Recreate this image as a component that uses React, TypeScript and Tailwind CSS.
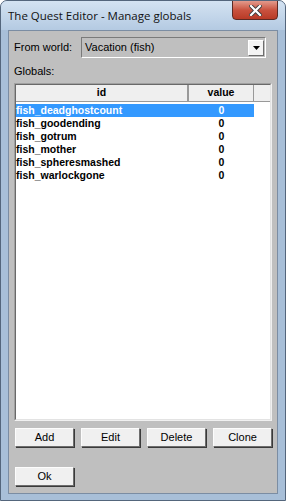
import React from "react";

const rows = [
  { id: "fish_deadghostcount", value: 0 },
  { id: "fish_goodending", value: 0 },
  { id: "fish_gotrum", value: 0 },
  { id: "fish_mother", value: 0 },
  { id: "fish_spheresmashed", value: 0 },
  { id: "fish_warlockgone", value: 0 },
];

const btn =
  "h-[19px] w-[59px] bg-[#f0f0f0] border border-t-[#fcfcfc] border-l-[#fcfcfc] border-r-[#6d6d6d] border-b-[#6d6d6d] shadow-[1px_1px_0_#3a3a3a] text-[11px] text-black flex items-center justify-center";

export default function App() {
  return (
    <div className="w-[286px] h-[501px] bg-[#a8bfd8] border border-[#54667c] rounded-t-[7px] flex flex-col font-['Liberation_Sans',sans-serif] overflow-hidden">
      {/* Title bar */}
      <div className="h-[29px] shrink-0 relative bg-gradient-to-b from-[#d4e3f2] to-[#b4cae2]">
        <div className="absolute left-[7px] top-[8px] text-[11.5px] text-[#111] font-['Open_Sans',sans-serif] leading-[14px]">
          The Quest Editor - Manage globals
        </div>
        <div className="absolute left-[231px] top-[-1px] w-[46px] h-[20px] rounded-b-[4px] border border-[#5c2a24] bg-gradient-to-b from-[#e29a8c] via-[#c9523f] to-[#b83a26] flex items-center justify-center">
          <svg width="13" height="11" viewBox="0 0 13 11">
            <path
              d="M2 1 L11 10 M11 1 L2 10"
              stroke="#3b3b3b"
              strokeWidth="4"
              strokeLinecap="square"
            />
            <path
              d="M2 1 L11 10 M11 1 L2 10"
              stroke="#ffffff"
              strokeWidth="2.2"
              strokeLinecap="square"
            />
          </svg>
        </div>
      </div>

      {/* Client area */}
      <div className="mx-[7px] mb-[6px] flex-1 border border-[#7b8da3] bg-[#bfbfbf] flex flex-col text-[11px] text-black">
        <div className="flex items-center h-[21px] mt-[6px] pl-[5px]">
          <span className="w-[67px]">From world:</span>
          <div className="w-[185px] h-[21px] border border-t-[#7a7a7a] border-l-[#7a7a7a] border-r-white border-b-white flex items-center">
            <span className="flex-1 pl-[3px]">Vacation (fish)</span>
            <div className="w-[16px] h-[16px] mr-[1px] bg-[#f4f4f4] border border-t-white border-l-white border-r-[#6d6d6d] border-b-[#6d6d6d] flex items-center justify-center">
              <svg width="7" height="4" viewBox="0 0 7 4">
                <path d="M0 0 H7 L3.5 4 Z" fill="#000" />
              </svg>
            </div>
          </div>
        </div>
        <div className="pl-[5px] mt-[7px] h-[13px] leading-[13px]">Globals:</div>

        {/* List */}
        <div className="mx-[5px] mt-[5px] h-[338px] border border-t-[#a0a0a0] border-l-[#a0a0a0] border-r-[#f0f0f0] border-b-[#f0f0f0] bg-white flex flex-col">
          <div className="flex-1 border border-t-[#696969] border-l-[#696969] border-r-[#e3e3e3] border-b-[#e3e3e3] flex flex-col">
            <div className="flex h-[17px] bg-[#efefef] shrink-0 text-[10.5px]">
              <div className="w-[173px] border-r-2 border-b border-r-[#999] border-b-[#999] flex items-center justify-center font-bold">
                id
              </div>
              <div className="w-[65px] border-r border-b border-r-[#999] border-b-[#999] flex items-center justify-center font-bold">
                value
              </div>
              <div className="flex-1 border-b border-b-[#999]" />
            </div>
            <div className="mt-[2px] flex flex-col text-[10.5px]">
              {rows.map((r, i) => (
                <div
                  key={r.id}
                  className={
                    "flex h-[13px] w-[238px] items-center font-bold " +
                    (i === 0 ? "bg-[#3399ff] text-white" : "text-black")
                  }
                >
                  <span className="w-[173px] leading-[13px]">{r.id}</span>
                  <span className="w-[65px] text-center leading-[13px]">{r.value}</span>
                </div>
              ))}
            </div>
          </div>
        </div>

        {/* Buttons */}
        <div className="flex gap-[7px] pl-[6px] mt-[7px]">
          <button className={btn}>Add</button>
          <button className={btn}>Edit</button>
          <button className={btn}>Delete</button>
          <button className={btn}>Clone</button>
        </div>
        <div className="pl-[6px] mt-[20px]">
          <button className={btn}>Ok</button>
        </div>
      </div>
    </div>
  );
}
